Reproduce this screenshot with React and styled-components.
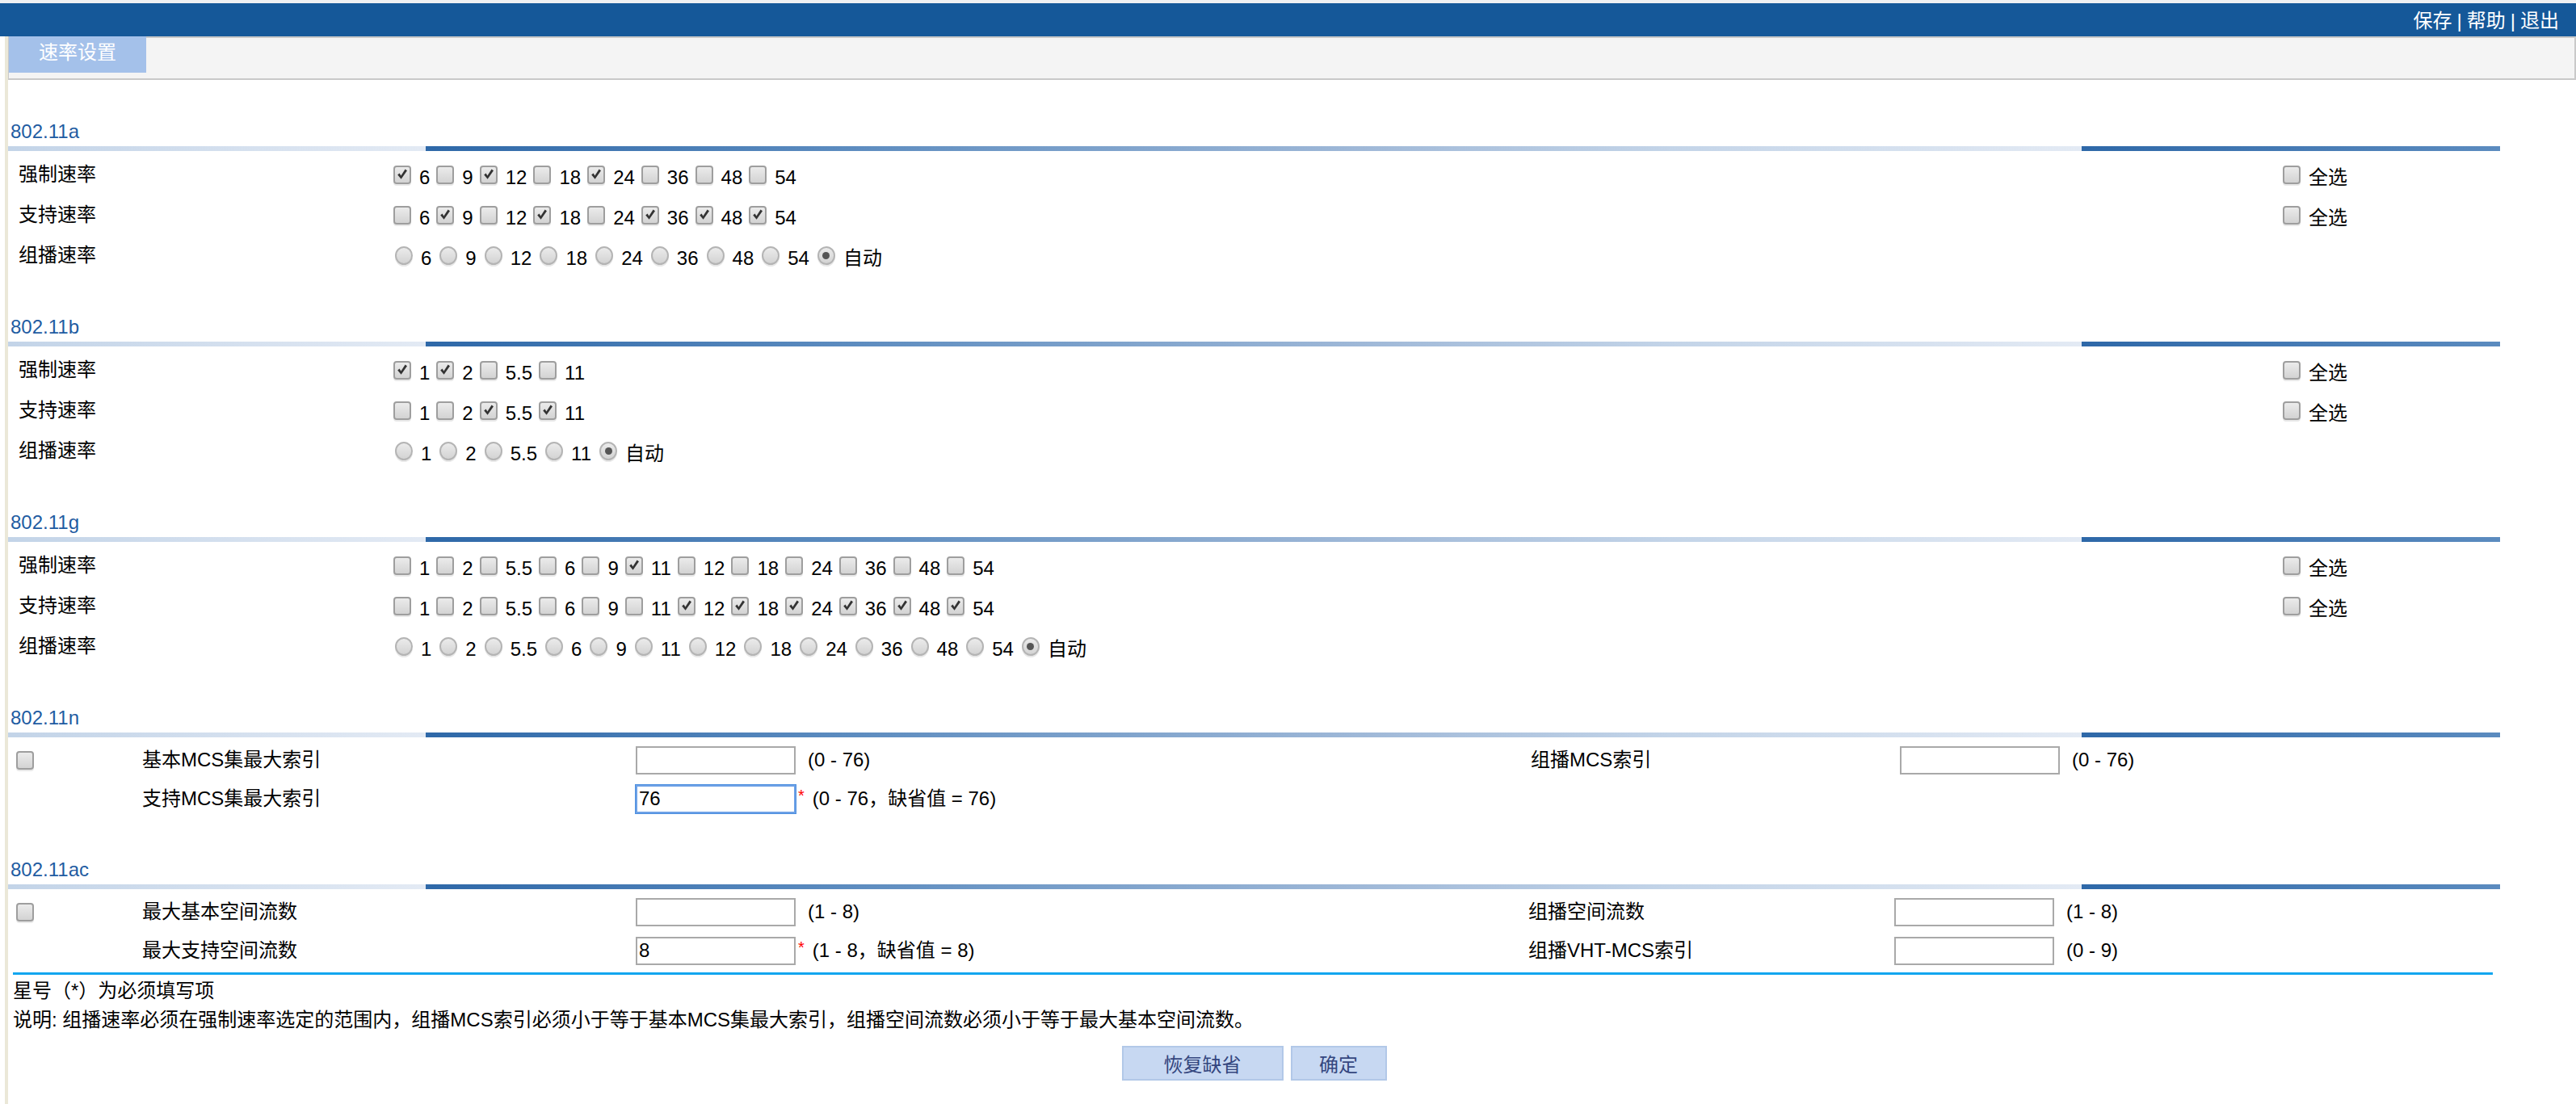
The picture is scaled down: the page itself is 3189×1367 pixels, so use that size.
import React from "react";
import styled, { createGlobalStyle } from "styled-components";

const Global = createGlobalStyle`
  html, body { margin: 0; padding: 0; background: #ffffff; }
  body {
    font-family: "Liberation Sans", "Noto Sans CJK SC", sans-serif;
    font-size: 24px;
    color: #000;
  }
  * { box-sizing: border-box; }
`;

const TopStrip = styled.div`
  height: 4px;
  background: #eef0f2;
`;

const Header = styled.header`
  height: 41px;
  background: #155899;
  display: flex;
  align-items: center;
  justify-content: flex-end;
  padding: 2px 21px 0 0;
  color: #fff;
  line-height: 28px;
`;

const HeaderLink = styled.span`
  color: #fff;
`;

const Sep = styled.span`
  padding: 0 6px;
`;

const Frame = styled.div`
  padding-left: 6px;
`;

const Main = styled.main`
  border-left: 4px solid #ebe8d8;
  min-height: calc(100vh - 45px);
`;

const TabBar = styled.div`
  height: 54px;
  background: #f4f4f4;
  border: 2px solid #c9c9c9;
  border-left-width: 1px;
  display: flex;
`;

const Tab = styled.div`
  margin-top: -2px;
  width: 170px;
  height: 45px;
  background: #a4c1ea;
  color: #fff;
  display: flex;
  align-items: center;
  justify-content: center;
  padding-bottom: 6px;
  line-height: 28px;
`;

const Content = styled.div`
  width: 3085px;
  padding-top: 50px;
`;

const Heading = styled.div`
  height: 28px;
  line-height: 28px;
  padding-left: 3px;
  margin-bottom: 4px;
  color: #1f5ca2;
`;

const Divider = styled.div`
  height: 6px;
  background-image: linear-gradient(
    to right,
    #2e68a8 0%,
    #5b8bbf 25%,
    #a0b9d8 57%,
    #c3d4e8 75%,
    #e3eaf4 100%
  );
  background-size: 2050px 6px;
  background-position: 517px 0;
  background-repeat: repeat-x;
`;

const Rows = styled.div`
  padding-top: 4px;
  margin-bottom: ${(p) => (p.$last ? "0" : "50px")};
`;

const RateRow = styled.div`
  display: grid;
  grid-template-columns: 477px 1fr 269px;
  height: 50px;
  align-items: center;
`;

const Label = styled.div`
  padding-left: ${(p) => p.$pad ?? 13}px;
  line-height: 28px;
  white-space: nowrap;
`;

const Options = styled.div`
  display: flex;
  align-items: center;
`;

const Item = styled.label`
  display: inline-flex;
  align-items: center;
  margin-right: 8px;
  margin-left: ${(p) => (p.$radio ? 2 : 0)}px;
`;

const ItemText = styled.span`
  padding-top: 8px;
  line-height: 28px;
  white-space: nowrap;
`;

const Box = styled.span`
  display: inline-flex;
  align-items: center;
  justify-content: center;
  width: 22px;
  height: 23px;
  margin-right: 10px;
  border: 2px solid ${(p) => (p.$round ? "#b4b4b4" : "#9e9e9e")};
  border-radius: ${(p) => (p.$round ? "50%" : "4px")};
  background: linear-gradient(#ebebeb, #d3d3d3);
  box-shadow: 0 2px 0 #e8e8e8;
  flex: none;
`;

const Dot = styled.span`
  width: 9px;
  height: 9px;
  border-radius: 50%;
  background: #555;
`;

const Check = ({ checked }) => (
  <Box>
    {checked && (
      <svg width="16" height="16" viewBox="0 0 16 16">
        <path
          d="M2.2 8.4 L4.6 6.6 L6.4 9.4 L11.6 1.6 L14 3.2 L6.6 13.8 Z"
          fill="#333"
        />
      </svg>
    )}
  </Box>
);

const Radio = ({ checked }) => (
  <Box $round>{checked && <Dot />}</Box>
);

const FieldRow = styled.div`
  display: grid;
  grid-template-columns: ${(p) => p.$cols};
  height: 48px;
  align-items: center;
`;

const CheckCell = styled.div`
  padding-left: 10px;
  display: flex;
  align-items: center;
`;

const InputCell = styled.div`
  display: flex;
  align-items: center;
`;

const TextInput = styled.input`
  width: 198px;
  height: 35px;
  border: 2px solid #a9a9a9;
  padding: 0 2px;
  font: inherit;
  font-size: 24px;
  color: #000;
  background: #fff;
  outline: none;
  box-shadow: ${(p) => (p.$focused ? "0 0 0 1px #4d8fe0" : "none")};
  border-color: ${(p) => (p.$focused ? "#6da1e6" : "#a9a9a9")};
`;

const Star = styled.span`
  color: #ff0000;
  margin-left: 3px;
  align-self: flex-start;
  margin-top: 2px;
  font-size: 20px;
`;

const Hint = styled.span`
  margin-left: ${(p) => (p.$afterStar ? 10 : 15)}px;
  white-space: nowrap;
  line-height: 28px;
`;

const CyanLine = styled.div`
  height: 3px;
  background: #12a6ef;
  margin: 3px 9px 0 6px;
`;

const Note = styled.div`
  line-height: 28px;
  padding-left: 6px;
  margin-top: ${(p) => p.$mt}px;
  white-space: nowrap;
`;

const ButtonBar = styled.div`
  display: flex;
  justify-content: center;
  gap: 9px;
  margin-top: 18px;
`;

const Button = styled.button`
  width: ${(p) => p.$w}px;
  height: 43px;
  border: 2px solid #b2c8e8;
  background: #c7d8f2;
  color: #34467e;
  font: inherit;
  font-size: 24px;
  padding: 0;
`;

const sections = [
  {
    title: "802.11a",
    rates: ["6", "9", "12", "18", "24", "36", "48", "54"],
    forced: ["6", "12", "24"],
    supported: ["9", "18", "36", "48", "54"],
  },
  {
    title: "802.11b",
    rates: ["1", "2", "5.5", "11"],
    forced: ["1", "2"],
    supported: ["5.5", "11"],
  },
  {
    title: "802.11g",
    rates: ["1", "2", "5.5", "6", "9", "11", "12", "18", "24", "36", "48", "54"],
    forced: ["11"],
    supported: ["12", "18", "24", "36", "48", "54"],
  },
];

const CheckRow = ({ label, rates, checkedSet }) => (
  <RateRow>
    <Label>{label}</Label>
    <Options>
      {rates.map((r) => (
        <Item key={r}>
          <Check checked={checkedSet.includes(r)} />
          <ItemText>{r}</ItemText>
        </Item>
      ))}
    </Options>
    <Options>
      <Item>
        <Check />
        <ItemText>全选</ItemText>
      </Item>
    </Options>
  </RateRow>
);

const RateSection = ({ s }) => (
  <section>
    <Heading>{s.title}</Heading>
    <Divider />
    <Rows>
      <CheckRow label="强制速率" rates={s.rates} checkedSet={s.forced} />
      <CheckRow label="支持速率" rates={s.rates} checkedSet={s.supported} />
      <RateRow>
        <Label>组播速率</Label>
        <Options>
          {s.rates.map((r) => (
            <Item key={r} $radio>
              <Radio />
              <ItemText>{r}</ItemText>
            </Item>
          ))}
          <Item $radio>
            <Radio checked />
            <ItemText>自动</ItemText>
          </Item>
        </Options>
        <div />
      </RateRow>
    </Rows>
  </section>
);

const Field = ({ value, hint, required, focused }) => (
  <InputCell>
    <TextInput defaultValue={value} $focused={focused} />
    {required && <Star>*</Star>}
    <Hint $afterStar={required}>{hint}</Hint>
  </InputCell>
);

export default function App() {
  return (
    <>
      <Global />
      <TopStrip />
      <Header>
        <HeaderLink>保存</HeaderLink>
        <Sep>|</Sep>
        <HeaderLink>帮助</HeaderLink>
        <Sep>|</Sep>
        <HeaderLink>退出</HeaderLink>
      </Header>
      <Frame>
        <Main>
          <TabBar>
            <Tab>速率设置</Tab>
          </TabBar>
          <Content>
            {sections.map((s) => (
              <RateSection key={s.title} s={s} />
            ))}

            <section>
              <Heading>802.11n</Heading>
              <Divider />
              <Rows>
                <FieldRow $cols="166px 611px 1108px 457px 1fr">
                  <CheckCell>
                    <Check />
                  </CheckCell>
                  <Label $pad={0}>基本MCS集最大索引</Label>
                  <Field value="" hint="(0 - 76)" />
                  <Label $pad={0}>组播MCS索引</Label>
                  <Field value="" hint="(0 - 76)" />
                </FieldRow>
                <FieldRow $cols="166px 611px 1108px 457px 1fr">
                  <div />
                  <Label $pad={0}>支持MCS集最大索引</Label>
                  <Field value="76" hint="(0 - 76，缺省值 = 76)" required focused />
                  <div />
                  <div />
                </FieldRow>
              </Rows>
            </section>

            <section>
              <Heading>802.11ac</Heading>
              <Divider />
              <Rows $last>
                <FieldRow $cols="166px 611px 1105px 453px 1fr">
                  <CheckCell>
                    <Check />
                  </CheckCell>
                  <Label $pad={0}>最大基本空间流数</Label>
                  <Field value="" hint="(1 - 8)" />
                  <Label $pad={0}>组播空间流数</Label>
                  <Field value="" hint="(1 - 8)" />
                </FieldRow>
                <FieldRow $cols="166px 611px 1105px 453px 1fr">
                  <div />
                  <Label $pad={0}>最大支持空间流数</Label>
                  <Field value="8" hint="(1 - 8，缺省值 = 8)" required />
                  <Label $pad={0}>组播VHT-MCS索引</Label>
                  <Field value="" hint="(0 - 9)" />
                </FieldRow>
              </Rows>
            </section>

            <CyanLine />
            <Note $mt={6}>星号（*）为必须填写项</Note>
            <Note $mt={8}>
              说明: 组播速率必须在强制速率选定的范围内，组播MCS索引必须小于等于基本MCS集最大索引，组播空间流数必须小于等于最大基本空间流数。
            </Note>
            <ButtonBar>
              <Button $w={200}>恢复缺省</Button>
              <Button $w={119}>确定</Button>
            </ButtonBar>
          </Content>
        </Main>
      </Frame>
    </>
  );
}
